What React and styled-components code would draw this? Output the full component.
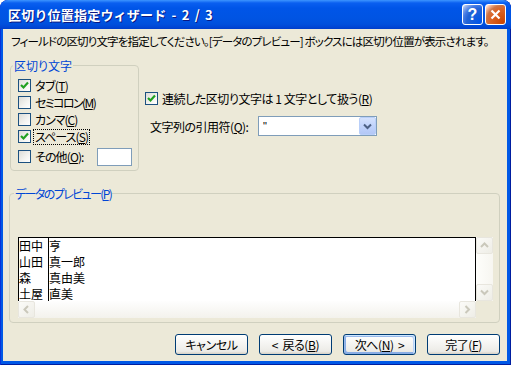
import React from "react";
import styled, { createGlobalStyle, css } from "styled-components";

const Global = createGlobalStyle`
  html, body { margin: 0; padding: 0; background: #ffffff; }
  body {
    font-family: "Noto Sans CJK JP", "Noto Sans", sans-serif;
    font-size: 12px;
    color: #000;
  }
  * { box-sizing: border-box; }
`;

const Window = styled.div`
  width: 511px;
  height: 365px;
  display: flex;
  flex-direction: column;
  background: #0058e6;
  border-radius: 8px 8px 0 0;
  overflow: hidden;
  box-shadow: inset 1px 0 #0831d9, inset -1px 0 #001ea0, inset 0 -1px #001ea0;
`;

const TitleBar = styled.div`
  height: 29px;
  flex: none;
  display: flex;
  align-items: center;
  padding: 0 5px 0 8px;
  border-radius: 8px 8px 0 0;
  background: linear-gradient(
    180deg,
    #3d95ff 0,
    #0a5ff0 3px,
    #0055e8 8px,
    #0054e3 18px,
    #0050dd 24px,
    #0046d5 27px,
    #003dc8 29px
  );
`;

const Title = styled.div`
  flex: 1;
  color: #fff;
  font-size: 13px;
  font-weight: bold;
  letter-spacing: 0.2px;
  word-spacing: 2px;
  white-space: pre;
  text-shadow: 1px 1px #0a1883;
`;

const CaptionButtons = styled.div`
  display: flex;
  gap: 2px;
`;

const CapBtn = styled.div`
  width: 21px;
  height: 21px;
  border: 1px solid #fff;
  border-radius: 3px;
  display: flex;
  align-items: center;
  justify-content: center;
  color: #fff;
  font-family: "Liberation Sans", sans-serif;
  font-weight: bold;
  font-size: 16px;
  ${(p) =>
    p.$close
      ? css`
          background: radial-gradient(circle at 90% 90%, #cc4600 0, #dc6527 55%, #cd7546 70%, #ffccb2 90%, #fff 100%);
        `
      : css`
          background: radial-gradient(circle at 90% 90%, #0054e9 0, #2263d5 55%, #4479e4 70%, #a3bbec 90%, #fff 100%);
        `}
`;

const Body = styled.div`
  flex: 1;
  margin: 0 4px 4px 3px;
  background: #ece9d8;
  padding: 4px 7px 6px 6px;
  display: flex;
  flex-direction: column;
  font-feature-settings: "palt";
`;

const Desc = styled.div`
  line-height: 16px;
  padding-left: 2px;
  font-size: 11.5px;
  letter-spacing: -0.85px;
  white-space: nowrap;
`;

const TopRow = styled.div`
  display: flex;
  align-items: flex-start;
  margin-top: 9px;
`;

const Group = styled.fieldset`
  margin: 0;
  min-width: 0;
  border: 1px solid #d0d0bf;
  border-radius: 4px;
`;

const Legend = styled.legend`
  color: #0046d5;
  padding: 0 1px;
  margin-left: ${(p) => p.$shift}px;
  line-height: 15px;
  font-size: 12px;
  letter-spacing: ${(p) => p.$ls || 0}px;
  white-space: nowrap;
`;

const DelimGroup = styled(Group)`
  width: 129px;
  margin-left: 1px;
  padding: 4px 6px 5px 7px;
`;

const CheckRow = styled.div`
  display: flex;
  align-items: center;
  gap: 3px;
  height: 17px;
  white-space: nowrap;
  margin-top: ${(p) => p.$top || 0}px;
`;

const Box = styled.span`
  width: 13px;
  height: 13px;
  flex: none;
  border: 1px solid #1c5180;
  background: linear-gradient(135deg, #dcdcd7 0%, #f4f4f1 60%, #ffffff 100%);
  display: flex;
  align-items: center;
  justify-content: center;
`;

const LabelText = styled.span`
  line-height: 14px;
  letter-spacing: ${(p) => p.$ls || 0}px;
  border: 1px dotted ${(p) => (p.$focus ? "#000" : "transparent")};
  padding: 0 1px;
  margin-left: -1px;
`;

const TextBox = styled.div`
  margin-left: auto;
  width: 35px;
  height: 18px;
  border: 1px solid #7f9db9;
  background: #fff;
`;

const RightCol = styled.div`
  margin-left: 6px;
  padding-top: 32px;
  display: flex;
  flex-direction: column;
`;

const QuoteRow = styled.div`
  display: flex;
  align-items: center;
  height: 20px;
  margin-top: 9px;
`;

const QuoteLabel = styled.span`
  width: 113px;
  padding-left: 5px;
  letter-spacing: -0.5px;
  white-space: nowrap;
`;

const Combo = styled.div`
  width: 119px;
  height: 20px;
  border: 1px solid #7f9db9;
  background: #fff;
  display: flex;
  align-items: center;
`;

const ComboText = styled.span`
  flex: 1;
  padding-left: 4px;
  font-family: "Liberation Sans", sans-serif;
  font-size: 11px;
  line-height: 18px;
`;

const ComboButton = styled.div`
  width: 17px;
  height: 18px;
  border: 1px solid #b9cff9;
  border-radius: 2px;
  background: linear-gradient(180deg, #d5e2fd 0%, #c1d3fb 50%, #b3c7f6 100%);
  display: flex;
  align-items: center;
  justify-content: center;
`;

const PreviewGroup = styled(Group)`
  margin-top: 15px;
  padding: 36px 6px 4px 8px;
`;

const PreviewFrame = styled.div`
  display: grid;
  grid-template-columns: 1fr 17px;
  grid-template-rows: 64px 17px;
`;

const DataArea = styled.div`
  border: 1px solid #000;
  border-bottom: none;
  background: #fff;
  overflow: hidden;
  line-height: 16px;
  font-feature-settings: normal;
`;

const DataRow = styled.div`
  display: flex;
  height: 16px;
  white-space: nowrap;
`;

const CellA = styled.div`
  width: 30px;
  flex: none;
  border-right: 1px solid #000;
`;

const CellB = styled.div`
  flex: 1;
`;

const VScroll = styled.div`
  display: flex;
  flex-direction: column;
  justify-content: space-between;
  background: linear-gradient(90deg, #fefefb, #f7f6f1);
`;

const HScroll = styled.div`
  display: flex;
  justify-content: space-between;
  background: linear-gradient(180deg, #fefefe, #f3f2ec);
`;

const ScrollBtn = styled.div`
  width: 17px;
  height: 17px;
  flex: none;
  border: 1px solid #e8e6de;
  border-radius: 2px;
  background: linear-gradient(135deg, #fbfbf8, #eeede6);
  display: flex;
  align-items: center;
  justify-content: center;
`;

const ButtonRow = styled.div`
  display: flex;
  justify-content: flex-end;
  gap: 11px;
  margin-top: 11px;
`;

const Button = styled.button`
  width: 73px;
  height: 21px;
  padding: 0;
  border: 1px solid #003c74;
  border-radius: 3px;
  background: linear-gradient(180deg, #ffffff, #ecebe6 86%, #d6d0c5);
  font-family: "Noto Sans CJK JP", "Noto Sans", sans-serif;
  font-size: 12px;
  font-feature-settings: "palt";
  letter-spacing: -0.4px;
  word-spacing: 2px;
  color: #000;
  line-height: 14px;
  display: flex;
  align-items: center;
  justify-content: center;
  white-space: pre;
  ${(p) =>
    p.$default &&
    css`
      box-shadow: inset -1px 1px #cee7ff, inset 1px 2px #98b8ea, inset -2px 2px #bcd4f6,
        inset 1px -1px #89ade4, inset 2px -2px #89ade4;
    `}
`;

const Check = ({ on }) => (
  <Box>
    {on && (
      <svg width="9" height="9" viewBox="0 0 9 9">
        <polyline points="1,4 3.5,6.5 8,1.5" fill="none" stroke="#21a121" strokeWidth="2.2" />
      </svg>
    )}
  </Box>
);

const Arrow = ({ dir }) => {
  const pts = {
    up: "1,5 4.5,1.5 8,5",
    down: "1,1.5 4.5,5 8,1.5",
    left: "5,1 1.5,4.5 5,8",
    right: "1.5,1 5,4.5 1.5,8",
  }[dir];
  const horiz = dir === "left" || dir === "right";
  return (
    <svg width={horiz ? 7 : 9} height={horiz ? 9 : 7} viewBox={horiz ? "0 0 7 9" : "0 0 9 7"}>
      <polyline points={pts} fill="none" stroke="#cac8bb" strokeWidth="2" />
    </svg>
  );
};

const rows = [
  ["田中", "亨"],
  ["山田", "真一郎"],
  ["森", "真由美"],
  ["土屋", "直美"],
];

export default function App() {
  return (
    <>
      <Global />
      <Window>
        <TitleBar>
          <Title>区切り位置指定ウィザード - 2 / 3</Title>
          <CaptionButtons>
            <CapBtn>?</CapBtn>
            <CapBtn $close>
              <svg width="11" height="11" viewBox="0 0 11 11">
                <path d="M1.5 1.5 L9.5 9.5 M9.5 1.5 L1.5 9.5" stroke="#fff" strokeWidth="2.2" />
              </svg>
            </CapBtn>
          </CaptionButtons>
        </TitleBar>
        <Body>
          <Desc>
            フィールドの区切り文字を指定してください。[データのプレビュー] ボックスには区切り位置が表示されます。
          </Desc>
          <TopRow>
            <DelimGroup>
              <Legend $shift={-5}>区切り文字</Legend>
              <CheckRow>
                <Check on />
                <LabelText $ls={-0.6}>
                  タブ(<u>T</u>)
                </LabelText>
              </CheckRow>
              <CheckRow>
                <Check />
                <LabelText $ls={-1.6}>
                  セミコロン(<u>M</u>)
                </LabelText>
              </CheckRow>
              <CheckRow>
                <Check />
                <LabelText $ls={-1}>
                  カンマ(<u>C</u>)
                </LabelText>
              </CheckRow>
              <CheckRow>
                <Check on />
                <LabelText $focus $ls={-0.9}>
                  スペース(<u>S</u>)
                </LabelText>
              </CheckRow>
              <CheckRow $top={3}>
                <Check />
                <LabelText $ls={-0.9}>
                  その他(<u>O</u>):
                </LabelText>
                <TextBox />
              </CheckRow>
            </DelimGroup>
            <RightCol>
              <CheckRow>
                <Check on />
                <LabelText $ls={-0.45}>
                  連続した区切り文字は 1 文字として扱う(<u>R</u>)
                </LabelText>
              </CheckRow>
              <QuoteRow>
                <QuoteLabel>
                  文字列の引用符(<u>Q</u>):
                </QuoteLabel>
                <Combo>
                  <ComboText>"</ComboText>
                  <ComboButton>
                    <svg width="9" height="7" viewBox="0 0 9 7">
                      <polyline points="1,1.5 4.5,5 8,1.5" fill="none" stroke="#4d6185" strokeWidth="2" />
                    </svg>
                  </ComboButton>
                </Combo>
              </QuoteRow>
            </RightCol>
          </TopRow>
          <PreviewGroup>
            <Legend $shift={-4} $ls={-1.6}>
              データのプレビュー(<u>P</u>)
            </Legend>
            <PreviewFrame>
              <DataArea>
                {rows.map(([a, b]) => (
                  <DataRow key={a}>
                    <CellA>{a}</CellA>
                    <CellB>{b}</CellB>
                  </DataRow>
                ))}
              </DataArea>
              <VScroll>
                <ScrollBtn>
                  <Arrow dir="up" />
                </ScrollBtn>
                <ScrollBtn>
                  <Arrow dir="down" />
                </ScrollBtn>
              </VScroll>
              <HScroll>
                <ScrollBtn>
                  <Arrow dir="left" />
                </ScrollBtn>
                <ScrollBtn>
                  <Arrow dir="right" />
                </ScrollBtn>
              </HScroll>
            </PreviewFrame>
          </PreviewGroup>
          <ButtonRow>
            <Button>キャンセル</Button>
            <Button>
              {"< 戻る("}
              <u>B</u>)
            </Button>
            <Button $default>
              次へ(<u>N</u>
              {") >"}
            </Button>
            <Button>
              完了(<u>F</u>)
            </Button>
          </ButtonRow>
        </Body>
      </Window>
    </>
  );
}
